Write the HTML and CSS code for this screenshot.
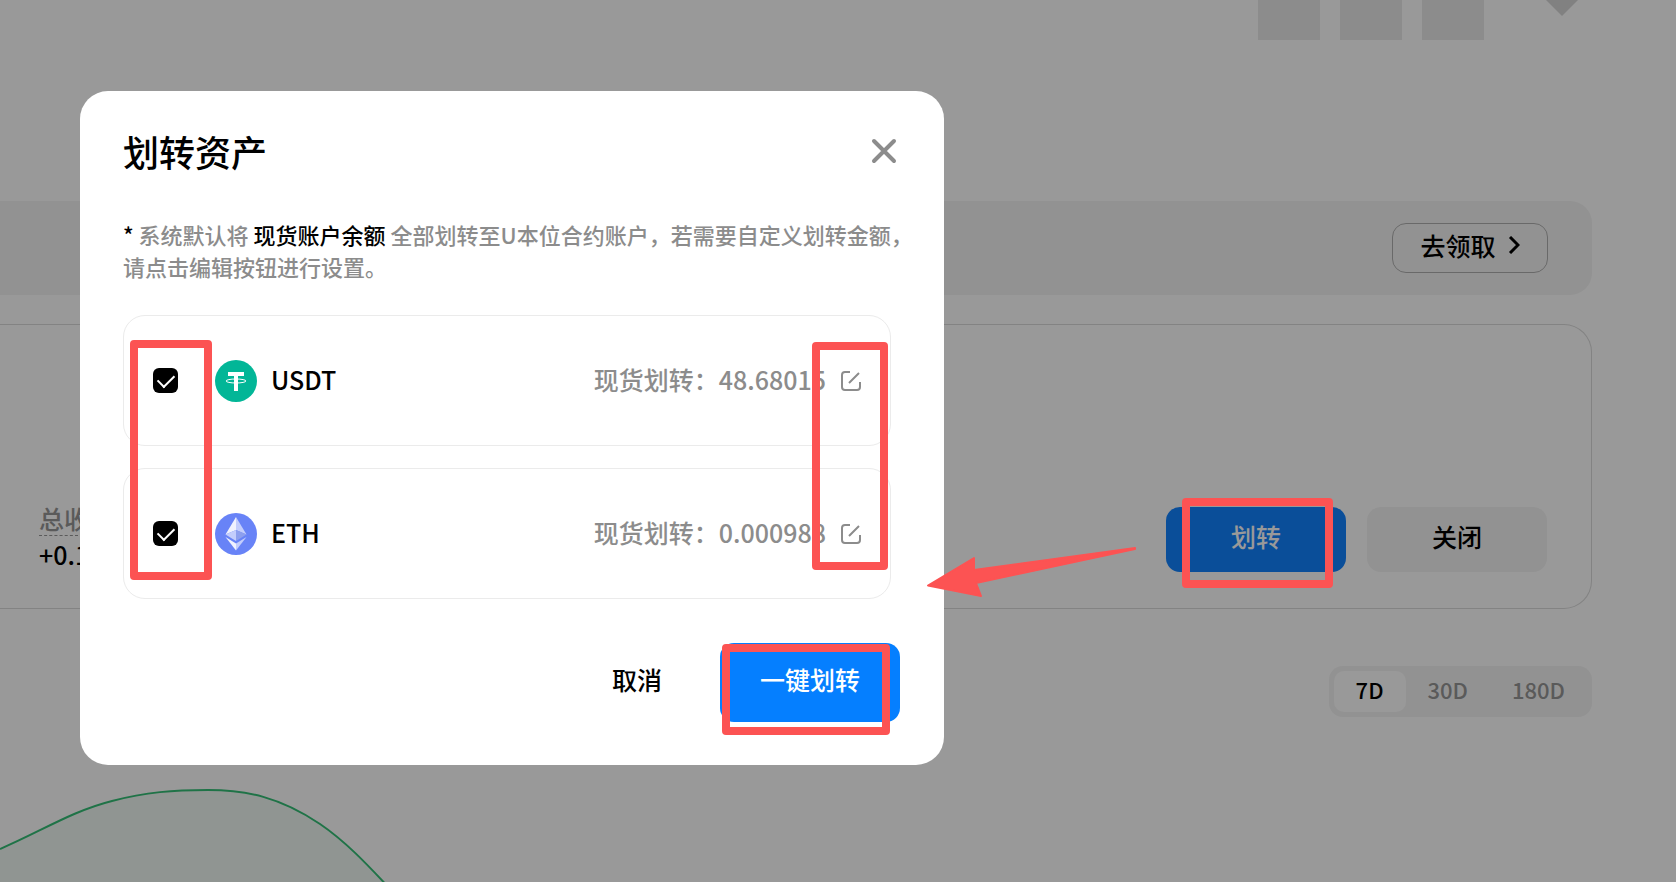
FILE: index.html
```html
<!DOCTYPE html>
<html lang="zh-CN">

<head>
    <meta charset="UTF-8">
    <meta name="viewport" content="width=device-width, initial-scale=1.0">
    <title>划转资产</title>
    <link rel="stylesheet" href="styles.css">
</head>

<body>
    <div class="page">
        <header class="topbar">
            <span class="block"></span>
            <span class="block"></span>
            <span class="block"></span>
            <svg class="diamond" width="32" height="16" viewBox="0 0 32 16">
                <path d="M0 0h32L16 16z" fill="#d8d8d8" />
            </svg>
        </header>

        <section class="banner">
            <button type="button" class="claim">
                去领取
                <svg width="12" height="18" viewBox="0 0 12 18" fill="none" stroke="#000" stroke-width="3">
                    <path d="M2 1l8 8-8 8" />
                </svg>
            </button>
        </section>

        <section class="card">
            <div class="stat">
                <span class="stat-label">总收益</span>
                <span class="stat-value">+0.1</span>
            </div>
            <div class="card-actions">
                <button type="button" class="btn btn-blue">划转</button>
                <button type="button" class="btn btn-gray">关闭</button>
            </div>
        </section>

        <div class="ranges">
            <button type="button" class="range active">7D</button>
            <button type="button" class="range">30D</button>
            <button type="button" class="range">180D</button>
        </div>

        <svg class="chart" width="400" height="100" viewBox="0 0 400 100">
            <path d="M0 61C40 44 72 23 112 13C146 4 174 2 208 2C246 2 280 9 320 36C345 53 366 75 392 103L392 110H0z" fill="#f1f9f4" />
            <path d="M0 61C40 44 72 23 112 13C146 4 174 2 208 2C246 2 280 9 320 36C345 53 366 75 392 103" fill="none" stroke="#35c077" stroke-width="2" />
        </svg>
    </div>

    <div class="mask"></div>

    <div class="modal" role="dialog" aria-labelledby="modalTitle">
        <div class="modal-header">
            <h1 id="modalTitle">划转资产</h1>
            <button type="button" class="close" aria-label="关闭">
                <svg width="26" height="26" viewBox="0 0 26 26" stroke="#8c8c8c" stroke-width="4" stroke-linecap="round">
                    <path d="M3 3l20 20M23 3L3 23" />
                </svg>
            </button>
        </div>

        <p class="tip"><b>*</b> 系统默认将 <b>现货账户余额</b> 全部划转至U本位合约账户，若需要自定义划转金额，<br>请点击编辑按钮进行设置。</p>

        <ul class="assets">
            <li class="asset">
                <input type="checkbox" id="usdt" checked>
                <label for="usdt">
                    <svg width="42" height="42" viewBox="0 0 42 42">
                        <circle cx="21" cy="21" r="21" fill="#02b697" />
                        <path d="M13 12h16v4h-6v15h-4V16h-6z" fill="#fff" />
                        <ellipse cx="21" cy="21" rx="10" ry="2" fill="none" stroke="#fff" stroke-width="1" />
                    </svg>
                    <span class="coin">USDT</span>
                </label>
                <span class="amount">现货划转：<span>48.68015</span></span>
                <button type="button" class="edit" aria-label="编辑 USDT">
                    <svg width="20" height="20" viewBox="0 0 20 20" fill="none" stroke="#8c8c8c" stroke-width="2">
                        <path d="M9 1H4a3 3 0 0 0-3 3v12a3 3 0 0 0 3 3h12a3 3 0 0 0 3-3v-5M8 12L18 2" />
                    </svg>
                </button>
            </li>
            <li class="asset">
                <input type="checkbox" id="eth" checked>
                <label for="eth">
                    <svg width="42" height="42" viewBox="0 0 42 42">
                        <circle cx="21" cy="21" r="21" fill="#6883f7" />
                        <path d="M21 4L10.500 21.500 21 17z" fill="#f0f2fe" />
                        <path d="M21 4l10.500 17.500L21 17z" fill="#c3cdfc" />
                        <path d="M21 17l-10.500 4.500L21 28z" fill="#c3cdfc" />
                        <path d="M21 17l10.500 4.500L21 28z" fill="#8d9fee" />
                        <path d="M10.500 24L21 30.500v7z" fill="#f0f2fe" />
                        <path d="M31.500 24L21 30.500v7z" fill="#c3cdfc" />
                    </svg>
                    <span class="coin">ETH</span>
                </label>
                <span class="amount">现货划转：<span>0.000988</span></span>
                <button type="button" class="edit" aria-label="编辑 ETH">
                    <svg width="20" height="20" viewBox="0 0 20 20" fill="none" stroke="#8c8c8c" stroke-width="2">
                        <path d="M9 1H4a3 3 0 0 0-3 3v12a3 3 0 0 0 3 3h12a3 3 0 0 0 3-3v-5M8 12L18 2" />
                    </svg>
                </button>
            </li>
        </ul>

        <div class="modal-footer">
            <button type="button" class="btn btn-text">取消</button>
            <button type="button" class="btn btn-primary">一键划转</button>
        </div>
    </div>

    <!-- Step marks -->
    <svg class="marks" aria-hidden="true">
        <g fill="none" stroke="#fc5353" stroke-width="8" stroke-linejoin="round">
            <rect x="134" y="344" width="74" height="232" />
            <rect x="816" y="346" width="68" height="220" />
            <rect x="726" y="648" width="160" height="83" />
            <rect x="1186" y="502" width="143" height="82" />
        </g>
        <path d="M928 585.500L974 558v12l161-22v1L976 583l5 13z" fill="#fc5353" stroke="#fc5353" stroke-width="2" stroke-linejoin="round" />
    </svg>
</body>

</html>
```

FILE: styles.css
```css
* {
    box-sizing: border-box;
}

body {
    margin: 0;
    height: 100vh;
    overflow: hidden;
    background-color: #fff;
    color: #000;
    font-family: "Noto Sans CJK SC", sans-serif;
    font-size: 25px;
    font-weight: 500;
}

button {
    padding: 0;
    border: none;
    background: none;
    color: inherit;
    font: inherit;
    cursor: pointer;
}

svg {
    display: block;
    flex: none;
}

/* Page behind the dialog */
.page {
    padding-right: 84px;
}

.topbar {
    display: flex;
    justify-content: flex-end;
    gap: 20px;
    height: 201px;
    padding-right: 14px;
}

.block {
    width: 62px;
    height: 40px;
    background-color: #e9e9e9;
}

.diamond {
    margin-left: 42px;
}

.banner {
    display: flex;
    align-items: center;
    justify-content: flex-end;
    height: 94px;
    padding-right: 44px;
    border-radius: 0 22px 22px 0;
    background-color: #f4f4f4;
}

.claim {
    display: flex;
    align-items: center;
    justify-content: center;
    gap: 12px;
    width: 156px;
    height: 50px;
    padding-bottom: 6px;
    border: 1px solid #b0b0b0;
    border-radius: 14px;
}

.card {
    display: flex;
    align-items: flex-end;
    justify-content: space-between;
    height: 285px;
    margin-top: 29px;
    padding: 0 44px 36px 39px;
    border: 1px solid #dadada;
    border-left: none;
    border-radius: 0 28px 28px 0;
}

.stat {
    display: flex;
    flex-direction: column;
}

.stat-label {
    border-bottom: 1px dashed #969696;
    color: #969696;
    line-height: 34px;
}

.stat-value {
    line-height: 36px;
}

.card-actions {
    display: flex;
    gap: 21px;
}

.btn {
    width: 180px;
    height: 65px;
    padding-bottom: 8px;
    border-radius: 14px;
}

.btn-blue {
    background-color: #1182ff;
    color: #fff;
}

.btn-gray {
    background-color: #f4f4f4;
}

.ranges {
    display: flex;
    width: fit-content;
    margin: 57px 0 0 auto;
    padding: 5px;
    border-radius: 14px;
    background-color: #f4f4f4;
    font-size: 22px;
}

.range {
    height: 41px;
    padding: 0 22px 6px;
    border-radius: 10px;
    color: #969696;
}

.range.active {
    background-color: #fff;
    color: #000;
}

.chart {
    margin-top: 71px;
}

.mask {
    position: fixed;
    inset: 0;
    background-color: rgba(0, 0, 0, 0.4);
}

/* Dialog */
.modal {
    position: fixed;
    top: 91px;
    left: 80px;
    width: 864px;
    padding: 42px 44px 43px 43px;
    border-radius: 28px;
    background-color: #fff;
}

.modal-header {
    display: flex;
    align-items: center;
    justify-content: space-between;
    height: 36px;
    padding-right: 3px;
}

h1 {
    margin: 0;
    font-size: 36px;
    font-weight: 500;
    line-height: 36px;
}

.tip {
    margin: 49px 0 0;
    color: #8c8c8c;
    font-size: 22px;
    line-height: 32px;
    white-space: nowrap;
}

.tip b {
    color: #000;
    font-weight: 500;
}

.assets {
    display: grid;
    gap: 22px;
    margin: 33px 9px 44px 0;
    padding: 0;
    list-style: none;
}

.asset {
    display: flex;
    align-items: center;
    height: 131px;
    padding: 0 29px;
    border: 1px solid #ebebeb;
    border-radius: 22px;
}

.asset input {
    appearance: none;
    display: grid;
    place-items: center;
    width: 25px;
    height: 25px;
    margin: 0 37px 0 0;
    border-radius: 6px;
    background-color: #000;
}

.asset input:checked::before {
    content: "";
    width: 14px;
    height: 8px;
    margin-bottom: 4px;
    border: solid #fff;
    border-width: 0 0 2px 2px;
    transform: rotate(-45deg);
}

.asset label {
    display: flex;
    align-items: center;
    gap: 14px;
}

.coin,
.amount {
    padding-bottom: 4px;
}

.amount {
    margin-left: auto;
    color: #8c8c8c;
}

.edit {
    margin-left: 15px;
}

.modal-footer {
    display: flex;
    justify-content: flex-end;
    gap: 22px;
}

.modal-footer .btn {
    height: 79px;
}

.modal-footer .btn-text {
    width: 122px;
}

.btn-primary {
    background-color: #057fff;
    color: #fff;
}

.marks {
    position: fixed;
    inset: 0;
    width: 100%;
    height: 100%;
    pointer-events: none;
}
```
